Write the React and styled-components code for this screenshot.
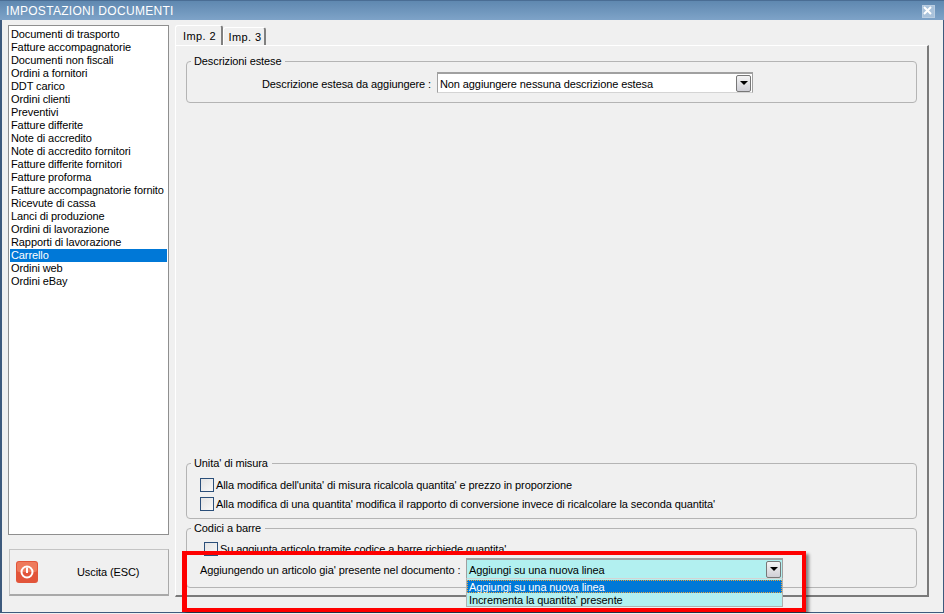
import React from 'react';
import styled, { createGlobalStyle } from 'styled-components';

const GlobalStyle = createGlobalStyle`
  html, body { margin: 0; padding: 0; background: #f0f0f0; }
  body { font-family: "Liberation Sans", Arial, sans-serif; font-size: 11px; letter-spacing: -0.1px; color: #000; overflow: hidden; }
`;

const Win = styled.div`
  position: relative;
  width: 944px;
  height: 613px;
  box-sizing: border-box;
  display: flex;
  flex-direction: column;
  background: #f0f0f0;
  border-left: 2px solid #3d5a7d;
  border-right: 1px solid #3d5a7d;
  border-bottom: 1px solid #3d5a7d;
`;

const TitleBar = styled.div`
  height: 20px;
  flex: none;
  margin: 0 -1px 0 -2px;
  padding: 1px 6px 0 6px;
  box-sizing: border-box;
  display: flex;
  align-items: center;
  justify-content: space-between;
  background: linear-gradient(#5f88b0, #7ea3c8);
  border-top: 1px solid #4a6d94;
  color: #fff;
  font-size: 12px;
  letter-spacing: 0.3px;
`;

const CloseBox = styled.span`
  width: 11px;
  height: 11px;
  margin-right: 3px;
  display: flex;
  background: #a9c2db;
  border: 1px solid #b9cde1;
`;

const Body = styled.div`
  flex: 1;
  display: flex;
  gap: 6px;
  padding: 5px 14px 15px 6px;
  min-height: 0;
`;

const Side = styled.div`
  width: 161px;
  flex: none;
  display: flex;
  flex-direction: column;
  gap: 14px;
`;

const List = styled.ul`
  height: 510px;
  box-sizing: border-box;
  margin: 0;
  padding: 2px 1px;
  list-style: none;
  background: #fff;
  border: 1px solid #8f8f8f;
  overflow: hidden;
`;

const ListItem = styled.li`
  height: 13px;
  line-height: 13px;
  padding-left: 1px;
  white-space: nowrap;
  background: ${p => (p.$active ? '#0078d7' : 'transparent')};
  color: ${p => (p.$active ? '#fff' : '#000')};
`;

const ExitButton = styled.div`
  height: 47px;
  margin-left: 1px;
  box-sizing: border-box;
  display: flex;
  align-items: center;
  padding-left: 6px;
  background: #f0f0f0;
  border: 1px solid #c4c4c4;
  border-right-color: #a9a9a9;
  border-bottom: 2px solid #a9a9a9;
`;

const ExitLabel = styled.span`
  margin-left: 39px;
`;

const Main = styled.div`
  flex: 1;
  display: flex;
  flex-direction: column;
  min-width: 0;
`;

const Tabs = styled.div`
  display: flex;
  height: 20px;
  flex: none;
  box-sizing: border-box;
`;

const Tab = styled.div`
  box-sizing: border-box;
  display: flex;
  align-items: center;
  justify-content: center;
  width: ${p => p.$width}px;
  padding-left: 2px;
  font-size: 11px;
  letter-spacing: 0.4px;
  background: #f0f0f0;
  border-top: 1px solid #fff;
  border-left: 1px solid #fff;
  border-right: 2px solid #808080;
  border-radius: 3px 3px 0 0;
  height: ${p => (p.$active ? 20 : 18)}px;
  margin-top: ${p => (p.$active ? 0 : 2)}px;
`;

const Pane = styled.div`
  flex: 1;
  box-sizing: border-box;
  display: flex;
  flex-direction: column;
  padding: 9px 10px 7px 10px;
  border-top: 1px solid #fff;
  border-left: 1px solid #fff;
  border-right: 2px solid #7a7a7a;
  border-bottom: 2px solid #7a7a7a;
`;

const Group = styled.fieldset`
  margin: ${p => p.$top || 0}px 0 0;
  padding: 0;
  min-width: 0;
  box-sizing: border-box;
  height: ${p => p.$height}px;
  flex: none;
  border: 1px solid #b4b4b4;
  border-radius: 4px;
`;

const Legend = styled.legend`
  margin-left: 4px;
  padding: 0 4px 0 3px;
  line-height: 13px;
  font-size: 11px;
`;

const Spacer = styled.div`
  flex: 1;
`;

const FormRow = styled.div`
  display: flex;
  align-items: center;
  height: 21px;
  padding-left: ${p => p.$indent}px;
  margin-top: ${p => p.$top || 0}px;
`;

const FormLabel = styled.span`
  width: ${p => p.$width}px;
  flex: none;
  padding-top: 2px;
  white-space: nowrap;
`;

const Combo = styled.div`
  position: relative;
  width: ${p => p.$width}px;
  height: 21px;
  box-sizing: border-box;
  display: flex;
  align-items: center;
  justify-content: space-between;
  padding: 0 1px 0 2px;
  background: ${p => p.$bg || '#fff'};
  border: 1px solid #a0a0a0;
  border-top-width: 2px;
  border-bottom-color: #d4d4d4;
`;

const ComboText = styled.span`
  padding-top: 2px;
  white-space: nowrap;
`;

const ComboArrow = styled.span`
  width: 15px;
  height: 17px;
  box-sizing: border-box;
  display: flex;
  align-items: center;
  justify-content: center;
  background: linear-gradient(#f4f4f4, #cfcfd6);
  border: 1px solid #777;
  border-radius: 2px;
`;

const Caret = styled.i`
  width: 0;
  height: 0;
  border-left: 4px solid transparent;
  border-right: 4px solid transparent;
  border-top: 4px solid #000;
`;

const DropList = styled.ul`
  position: absolute;
  left: -1px;
  right: -1px;
  top: 19px;
  margin: 0;
  padding: 1px 0 0;
  list-style: none;
  background: #b2f0f0;
  border: 1px solid #b0b0b0;
  border-top: 0;
  z-index: 2;
`;

const DropItem = styled.li`
  height: 13px;
  line-height: 15px;
  padding-left: 2px;
  white-space: nowrap;
  color: ${p => (p.$active ? '#fff' : '#000')};
  background: ${p => (p.$active ? '#0078d7' : 'transparent')};
  ${p => (p.$active ? 'outline: 1px dotted #e8a33c; outline-offset: -1px;' : '')}
`;

const CheckRow = styled.label`
  display: flex;
  align-items: center;
  height: 19px;
  padding-left: ${p => p.$indent}px;
  white-space: nowrap;
  margin-top: ${p => p.$top || 0}px;
`;

const CheckBox = styled.span`
  width: 14px;
  height: 14px;
  box-sizing: border-box;
  flex: none;
  background: linear-gradient(135deg, #e4e4e4, #f8f8f8);
  border: 1px solid #2b4f7a;
  margin-right: 2px;
`;

const Highlight = styled.div`
  position: absolute;
  left: 180px;
  top: 551px;
  width: 624px;
  height: 61px;
  box-sizing: border-box;
  border: 4px solid #fe0000;
  border-left-width: 5px;
  box-shadow: 3px 3px 3px rgba(0, 0, 0, 0.45);
  pointer-events: none;
  z-index: 3;
`;

const DOCS = [
  'Documenti di trasporto',
  'Fatture accompagnatorie',
  'Documenti non fiscali',
  'Ordini a fornitori',
  'DDT carico',
  'Ordini clienti',
  'Preventivi',
  'Fatture differite',
  'Note di accredito',
  'Note di accredito fornitori',
  'Fatture differite fornitori',
  'Fatture proforma',
  'Fatture accompagnatorie fornito',
  'Ricevute di cassa',
  'Lanci di produzione',
  'Ordini di lavorazione',
  'Rapporti di lavorazione',
  'Carrello',
  'Ordini web',
  'Ordini eBay',
];

const PowerIcon = () => (
  <svg width="22" height="22" viewBox="0 0 22 22">
    <rect x="0" y="0" width="22" height="22" rx="3" fill="#e2553a" />
    <rect x="1" y="1" width="20" height="10" rx="2" fill="#ee7a5c" />
    <circle cx="11" cy="11" r="5.5" fill="none" stroke="#fff" strokeWidth="2" />
    <rect x="10" y="6.5" width="2" height="5.5" fill="#fff" />
  </svg>
);

const CloseIcon = () => (
  <svg width="9" height="9" viewBox="0 0 9 9">
    <path d="M1 1 L8 8 M8 1 L1 8" stroke="#fff" strokeWidth="2" />
  </svg>
);

const App = () => (
  <Win>
    <GlobalStyle />
    <TitleBar>
      <span>IMPOSTAZIONI DOCUMENTI</span>
      <CloseBox><CloseIcon /></CloseBox>
    </TitleBar>
    <Body>
      <Side>
        <List>
          {DOCS.map(name => (
            <ListItem key={name} $active={name === 'Carrello'}>{name}</ListItem>
          ))}
        </List>
        <ExitButton>
          <PowerIcon />
          <ExitLabel>Uscita (ESC)</ExitLabel>
        </ExitButton>
      </Side>
      <Main>
        <Tabs>
          <Tab $active $width={48}>Imp. 2</Tab>
          <Tab $width={43}>Imp. 3</Tab>
        </Tabs>
        <Pane>
          <Group $height={48}>
            <Legend>Descrizioni estese</Legend>
            <FormRow $indent={75} $top={4}>
              <FormLabel $width={175}>Descrizione estesa da aggiungere :</FormLabel>
              <Combo $width={316}>
                <ComboText>Non aggiungere nessuna descrizione estesa</ComboText>
                <ComboArrow><Caret /></ComboArrow>
              </Combo>
            </FormRow>
          </Group>
          <Spacer />
          <Group $height={62}>
            <Legend>Unita' di misura</Legend>
            <CheckRow $indent={13} $top={5}><CheckBox />Alla modifica dell'unita' di misura ricalcola quantita' e prezzo in proporzione</CheckRow>
            <CheckRow $indent={13}><CheckBox />Alla modifica di una quantita' modifica il rapporto di conversione invece di ricalcolare la seconda quantita'</CheckRow>
          </Group>
          <Group $height={66} $top={3}>
            <Legend>Codici a barre</Legend>
            <CheckRow $indent={17} $top={4}><CheckBox />Su aggiunta articolo tramite codice a barre richiede quantita'</CheckRow>
            <FormRow $indent={13} $top={0}>
              <FormLabel $width={266}>Aggiungendo un articolo gia' presente nel documento :</FormLabel>
              <Combo $width={317} $bg="#b2f0f0">
                <ComboText>Aggiungi su una nuova linea</ComboText>
                <ComboArrow><Caret /></ComboArrow>
                <DropList>
                  <DropItem $active>Aggiungi su una nuova linea</DropItem>
                  <DropItem>Incrementa la quantita' presente</DropItem>
                </DropList>
              </Combo>
            </FormRow>
          </Group>
        </Pane>
      </Main>
    </Body>
    <Highlight />
  </Win>
);

export default App;
